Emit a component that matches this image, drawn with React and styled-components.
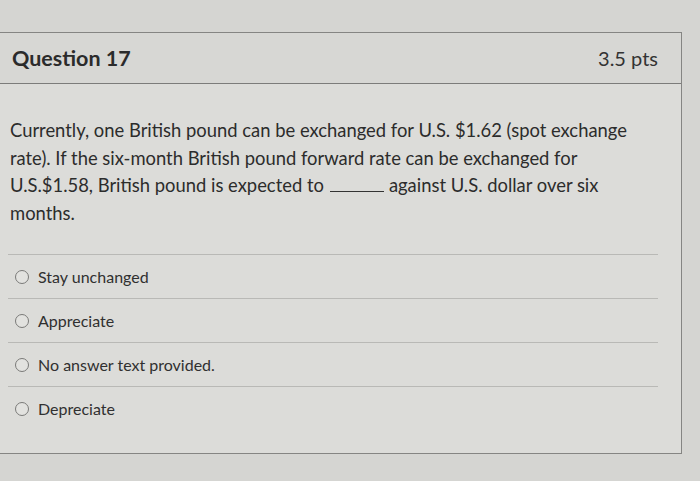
import React from "react";
import styled, { createGlobalStyle } from "styled-components";

const GlobalStyle = createGlobalStyle`
  html, body {
    margin: 0;
    padding: 0;
    background: #d5d5d2;
  }
  body {
    font-family: Lato, "Liberation Sans", sans-serif;
    color: #2e2e2e;
  }
`;

const Page = styled.div`
  width: 700px;
  height: 481px;
  padding-top: 32px;
  box-sizing: border-box;
  overflow: hidden;
`;

const Card = styled.div`
  width: 681px;
  border: 1px solid #858583;
  border-left: none;
  background: #dcdcd9;
`;

const Header = styled.div`
  height: 50px;
  display: flex;
  align-items: center;
  justify-content: space-between;
  padding: 0 23px 0 12px;
  background: #d7d7d4;
  border-bottom: 1px solid #7c7c7a;
`;

const Title = styled.h2`
  margin: 0;
  font-size: 21.5px;
  font-weight: 700;
  color: #2b2b2b;
`;

const Points = styled.span`
  font-size: 20px;
  color: #333;
`;

const Body = styled.div`
  padding: 33px 23px 23px 10px;
`;

const QuestionText = styled.p`
  margin: 0 0 27px;
  font-size: 18.4px;
  line-height: 27.5px;
  max-width: 645px;
  color: #2c2c2c;
`;

const Blank = styled.span`
  display: inline-block;
  width: 54px;
  margin: 0 5px 0 6px;
  border-bottom: 1px solid #333;
  vertical-align: baseline;
`;

const Answers = styled.div`
  margin-left: -2px;
`;

const Answer = styled.label`
  display: flex;
  align-items: center;
  gap: 9px;
  height: 43px;
  padding-left: 7px;
  border-top: 1px solid #b9b9b6;
  font-size: 16px;
  color: #303030;
`;

const Radio = styled.span`
  width: 12px;
  height: 12px;
  border-radius: 50%;
  border: 1.5px solid #7a7a78;
  background: #e2e2df;
  flex-shrink: 0;
`;

const answers = [
  "Stay unchanged",
  "Appreciate",
  "No answer text provided.",
  "Depreciate",
];

const App = () => {
  return (
    <Page>
      <GlobalStyle />
      <Card>
        <Header>
          <Title>Question 17</Title>
          <Points>3.5 pts</Points>
        </Header>
        <Body>
          <QuestionText>
            Currently, one British pound can be exchanged for U.S. $1.62 (spot
            exchange rate). If the six-month British pound forward rate can be
            exchanged for U.S.$1.58, British pound is expected to
            <Blank />
            against U.S. dollar over six months.
          </QuestionText>
          <Answers>
            {answers.map((a) => (
              <Answer key={a}>
                <Radio />
                {a}
              </Answer>
            ))}
          </Answers>
        </Body>
      </Card>
    </Page>
  );
};

export default App;
